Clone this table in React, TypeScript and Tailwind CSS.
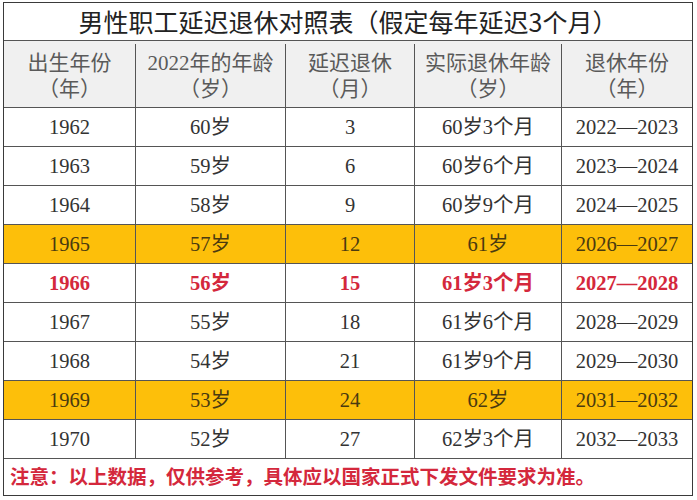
import React from "react";

const cols = ["w-[132px]", "w-[150px]", "w-[129px]", "w-[147px]", "flex-1"];

type Row = { y: string; age: string; d: string; ra: string; ry: string; kind?: "yellow" | "red" };

const rows: Row[] = [
  { y: "1962", age: "60岁", d: "3", ra: "60岁3个月", ry: "2022—2023" },
  { y: "1963", age: "59岁", d: "6", ra: "60岁6个月", ry: "2023—2024" },
  { y: "1964", age: "58岁", d: "9", ra: "60岁9个月", ry: "2024—2025" },
  { y: "1965", age: "57岁", d: "12", ra: "61岁", ry: "2026—2027", kind: "yellow" },
  { y: "1966", age: "56岁", d: "15", ra: "61岁3个月", ry: "2027—2028", kind: "red" },
  { y: "1967", age: "55岁", d: "18", ra: "61岁6个月", ry: "2028—2029" },
  { y: "1968", age: "54岁", d: "21", ra: "61岁9个月", ry: "2029—2030" },
  { y: "1969", age: "53岁", d: "24", ra: "62岁", ry: "2031—2032", kind: "yellow" },
  { y: "1970", age: "52岁", d: "27", ra: "62岁3个月", ry: "2032—2033" },
];

const serif = { fontFamily: '"Liberation Serif", "Noto Sans CJK SC", serif' } as const;

export default function App() {
  const headers = [
    ["出生年份", "（年）"],
    ["2022年的年龄", "（岁）"],
    ["延迟退休", "（月）"],
    ["实际退休年龄", "（岁）"],
    ["退休年份", "（年）"],
  ];
  return (
    <div className="w-[697px] h-[500px] bg-white pt-[2px] pl-[3px]">
      <div className="w-[690px] border-[1.5px] border-[#3a3a3a] flex flex-col">
        <div
          className="h-[38px] flex items-center justify-center text-[25px] text-[#222] border-b-[1.5px] border-[#555]"
          style={{ fontFamily: '"Noto Sans CJK SC", sans-serif' }}
        >
          男性职工延迟退休对照表（假定每年延迟3个月）
        </div>
        <div className="h-[66px] flex bg-[#f0f0f0] text-[#5a5a5a] text-[21px] leading-[26px] pt-[3px]" style={serif}>
          {headers.map((h, i) => (
            <div
              key={i}
              className={`${cols[i]} flex flex-col items-center justify-center ${i < 4 ? "border-r-[1.5px] border-[#555]" : ""}`}
            >
              <div>{h[0]}</div>
              <div>{h[1]}</div>
            </div>
          ))}
        </div>
        {rows.map((r, ri) => {
          const bg = r.kind === "yellow" ? "bg-[#fdbf0a]" : "bg-white";
          const color = r.kind === "red" ? "text-[#d4283c] font-bold" : r.kind === "yellow" ? "text-[#4a3a10]" : "text-[#333]";
          const vals = [r.y, r.age, r.d, r.ra, r.ry];
          return (
            <div key={ri} className={`h-[39px] flex border-t-[1.5px] border-[#555] ${bg} ${color} text-[20.5px]`} style={serif}>
              {vals.map((v, i) => (
                <div
                  key={i}
                  className={`${cols[i]} flex items-center justify-center ${i < 4 ? "border-r-[1.5px] border-[#555]" : ""}`}
                >
                  {v}
                </div>
              ))}
            </div>
          );
        })}
        <div
          className="h-[37px] flex items-center pl-[6px] pt-[2px] border-t-[1.5px] border-[#555] text-[#d4283c] font-bold text-[19.5px]"
          style={serif}
        >
          注意：以上数据，仅供参考，具体应以国家正式下发文件要求为准。
        </div>
      </div>
    </div>
  );
}
